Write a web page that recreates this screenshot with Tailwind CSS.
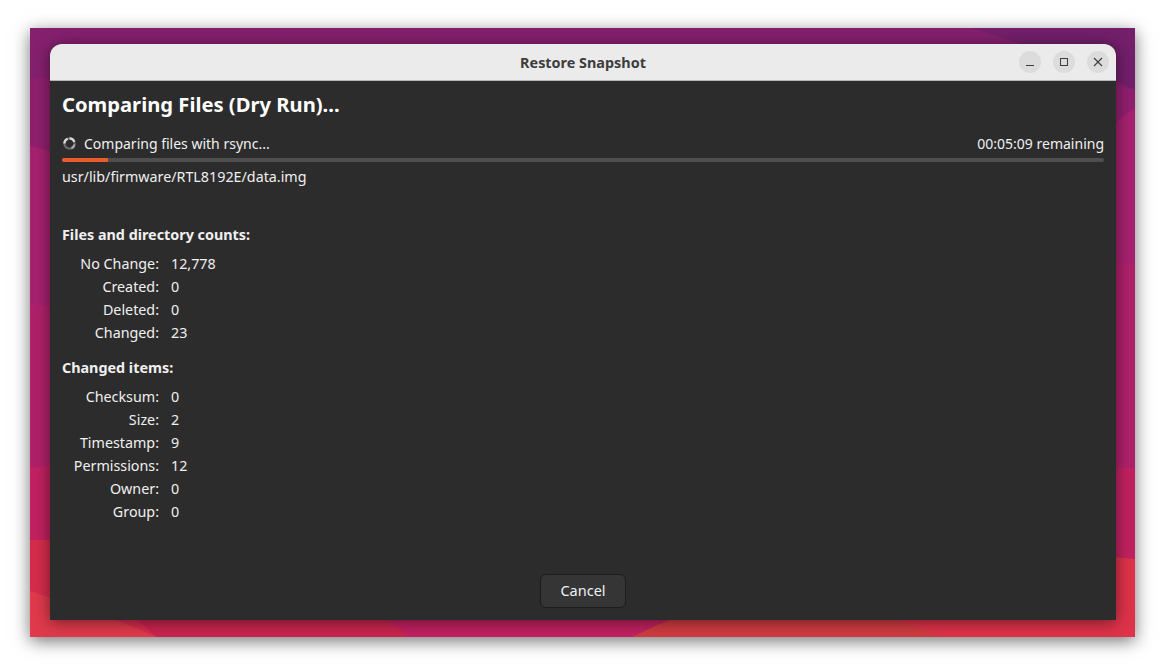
<!DOCTYPE html>
<html>
<head>
<meta charset="utf-8">
<script src="https://cdn.jsdelivr.net/npm/@tailwindcss/browser@4"></script>
</head>
<body class="bg-white w-[1165px] h-[669px] overflow-hidden font-['Noto_Sans',sans-serif]">
<div class="pt-7 pl-[30px]">
<div class="relative w-[1105px] h-[609px] shadow-[0_4px_16px_rgba(0,0,0,0.55)] overflow-hidden">
<svg class="absolute inset-0" width="1105" height="609" viewBox="0 0 1105 609">
<rect width="1105" height="609" fill="#85206f"/>
<path d="M941 0H1105V62Q1040 30 941 0Z" fill="#731f6b"/>
<path d="M220 16Q300 12 400 16L420 30L200 30Z" fill="#8a2069"/>
<path d="M0 52Q40 44 100 40L1000 40Q1060 50 1105 62V609H0Z" fill="#90206f"/>
<path d="M0 118Q30 126 60 130L1060 130Q1085 90 1105 80V609H0Z" fill="#a6216f"/>
<path d="M0 275Q30 280 60 286L1050 250Q1080 232 1105 235V609H0Z" fill="#af216a"/>
<path d="M0 440Q30 436 60 432L1050 440H1105V609H0Z" fill="#c12160"/>
<path d="M0 512Q40 510 90 530L300 560L379 609H0Z" fill="#d62c4c"/>
<path d="M87 592L127 609H0V563Z" fill="#e03a4c"/>
<path d="M127 609L87 575L240 575L336 575L379 609Z" fill="#c9244f"/>
<path d="M602 609Q650 585 700 570H820L912 609Z" fill="#cf3c40"/>
<path d="M912 609L820 575H1060L1058 527L1105 531V609Z" fill="#de334a"/>
</svg>
<div class="absolute left-5 top-4 w-[1066px] h-[576px] rounded-t-xl overflow-hidden shadow-[0_2px_16px_rgba(0,0,0,0.5)] flex flex-col bg-[#2c2c2c]">
<header class="h-[37px] shrink-0 bg-[#ebebeb] border-b border-[#b5b5b5] flex items-center relative">
<h1 class="w-full text-center text-[14.4px] font-bold text-[#3d3d3d] pt-px">Restore Snapshot</h1>
<div class="absolute right-[7px] top-[7px] flex gap-3">
<button class="w-[22px] h-[22px] rounded-full bg-[#dcdcdc] flex items-center justify-center"><svg width="10" height="10" viewBox="0 0 10 10"><path d="M1 8.5H9" stroke="#3d3d3d" stroke-width="1"/></svg></button>
<button class="w-[22px] h-[22px] rounded-full bg-[#dcdcdc] flex items-center justify-center"><svg width="10" height="10" viewBox="0 0 10 10"><rect x="1.5" y="1.5" width="7" height="7" fill="none" stroke="#3d3d3d" stroke-width="1"/></svg></button>
<button class="w-[22px] h-[22px] rounded-full bg-[#dcdcdc] flex items-center justify-center"><svg width="10" height="10" viewBox="0 0 10 10"><path d="M1 1L9 9M9 1L1 9" stroke="#3d3d3d" stroke-width="1.1"/></svg></button>
</div>
</header>
<main class="flex-1 flex flex-col px-3 text-[14.3px] text-[#f0f0f0] relative">
<h2 class="text-[20.2px] leading-[26px] font-bold mt-[10px] text-white">Comparing Files (Dry Run)...</h2>
<div class="flex items-center justify-between mt-4 h-5 text-[14px]">
<div class="flex items-center gap-[8px] pl-px">
<svg width="13" height="13" viewBox="0 0 14 14" fill="none" stroke-width="2.4"><circle cx="7" cy="7" r="5.5" stroke="#6a6a6a"/><path d="M7 1.5A5.5 5.5 0 0 1 12.2 5.2M1.5 7A5.5 5.5 0 0 1 5 1.9" stroke="#d8d8d8"/><path d="M12.4 8A5.5 5.5 0 0 1 9 12.1" stroke="#a8a8a8"/></svg>
<span>Comparing files with rsync...</span>
</div>
<span>00:05:09 remaining</span>
</div>
<div class="h-1 mt-[5px] bg-[#4f4f4f] rounded-sm overflow-hidden"><div class="h-full w-[46px] bg-[#e95d2c]"></div></div>
<p class="mt-[5px] leading-5">usr/lib/firmware/RTL8192E/data.img</p>
<h3 class="font-bold text-[14.35px] mt-[38px] leading-5">Files and directory counts:</h3>
<dl class="grid grid-cols-[97px_1fr] gap-x-3 mt-[7px] leading-[23px]">
<dt class="text-right">No Change:</dt><dd>12,778</dd>
<dt class="text-right">Created:</dt><dd>0</dd>
<dt class="text-right">Deleted:</dt><dd>0</dd>
<dt class="text-right">Changed:</dt><dd>23</dd>
</dl>
<h3 class="font-bold text-[14.35px] mt-[14px] leading-5">Changed items:</h3>
<dl class="grid grid-cols-[97px_1fr] gap-x-3 mt-[7px] leading-[23px]">
<dt class="text-right">Checksum:</dt><dd>0</dd>
<dt class="text-right">Size:</dt><dd>2</dd>
<dt class="text-right">Timestamp:</dt><dd>9</dd>
<dt class="text-right">Permissions:</dt><dd>12</dd>
<dt class="text-right">Owner:</dt><dd>0</dd>
<dt class="text-right">Group:</dt><dd>0</dd>
</dl>
<div class="mt-auto mb-[12px] flex justify-center">
<button class="w-[86px] h-[34px] rounded-md bg-[#353535] border border-[#1c1c1c] text-[14.5px] text-[#f0f0f0]">Cancel</button>
</div>
</main>
</div>
</div>
</div>
</body>
</html>
